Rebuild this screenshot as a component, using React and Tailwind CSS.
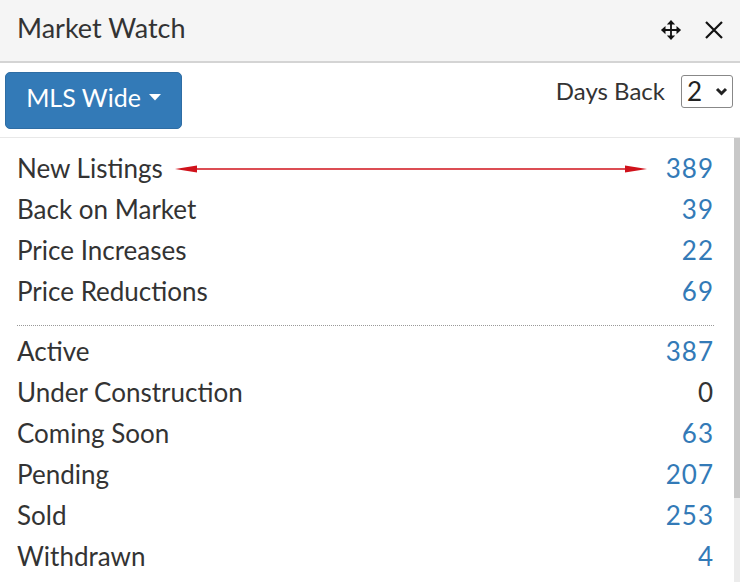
import React from "react";

const rows1 = [
  ["New Listings", "389", true],
  ["Back on Market", "39", true],
  ["Price Increases", "22", true],
  ["Price Reductions", "69", true],
];
const rows2 = [
  ["Active", "387", true],
  ["Under Construction", "0", false],
  ["Coming Soon", "63", true],
  ["Pending", "207", true],
  ["Sold", "253", true],
  ["Withdrawn", "4", true],
];

function Row({ label, value, link, arrow }) {
  return (
    <div className="relative flex h-[41px] items-center justify-between">
      <span className="text-[#333]">{label}</span>
      {arrow && (
        <svg className="absolute left-[158px] top-[16px]" width="472" height="10" viewBox="0 0 472 10">
          <line x1="10" y1="5" x2="462" y2="5" stroke="#d0121b" strokeWidth="1.3" />
          <polygon points="0,5 22,1.5 22,8.5" fill="#d0121b" />
          <polygon points="472,5 450,1.5 450,8.5" fill="#d0121b" />
        </svg>
      )}
      <span className={"tracking-[1px] " + (link ? "text-[#337ab7]" : "text-[#333]")}>{value}</span>
    </div>
  );
}

export default function App() {
  return (
    <div
      className="flex h-[582px] w-[740px] flex-col overflow-hidden bg-white"
      style={{ fontFamily: "Lato, 'Open Sans', sans-serif" }}
    >
      <div className="flex h-[63px] shrink-0 items-center justify-between border-b-2 border-[#d4d4d4] bg-[#f5f5f5] pl-[17px] pr-[16px]">
        <span className="text-[27px] text-[#333] pb-[4px]">Market Watch</span>
        <div className="flex items-center gap-[22px] pb-[2px]">
          <svg width="22" height="22" viewBox="0 0 24 24">
            <path d="M11 4h2v16h-2z M4 11h16v2H4z" fill="#111" />
            <polygon points="12,1 16.5,6 7.5,6" fill="#111" />
            <polygon points="12,23 16.5,18 7.5,18" fill="#111" />
            <polygon points="1,12 6,7.5 6,16.5" fill="#111" />
            <polygon points="23,12 18,7.5 18,16.5" fill="#111" />
          </svg>
          <svg width="20" height="20" viewBox="0 0 20 20">
            <path d="M2 2L18 18M18 2L2 18" stroke="#111" strokeWidth="2.2" />
          </svg>
        </div>
      </div>
      <div className="flex h-[75px] shrink-0 items-center justify-between border-b border-[#e8e8e8] pl-[5px] pr-[7px]">
        <button className="flex h-[57px] w-[177px] items-center justify-center gap-[8px] rounded-[5px] border border-[#2e6da4] bg-[#337ab7] pb-[5px] text-[25px] text-white">
          <span>MLS Wide</span>
          <svg width="12" height="7" viewBox="0 0 12 7">
            <polygon points="0,0 12,0 6,6.5" fill="#fff" />
          </svg>
        </button>
        <div className="flex items-center gap-[16px] pb-[18px]">
          <span className="text-[24px] text-[#333]">Days Back</span>
          <div className="flex h-[33px] w-[52px] items-center justify-between rounded-[3px] border border-[#888] pl-[5px] pr-[4px] text-[26px] text-[#222]">
            <span>2</span>
            <svg width="13" height="10" viewBox="0 0 13 10">
              <path d="M2 3L6.5 7.5L11 3" stroke="#222" strokeWidth="3" fill="none" />
            </svg>
          </div>
        </div>
      </div>
      <div className="flex min-h-0 flex-1">
        <div className="flex-1 pl-[17px] pr-[20px] pt-[10px] text-[26px]">
          {rows1.map(([l, v, k], i) => (
            <Row key={l} label={l} value={v} link={k} arrow={i === 0} />
          ))}
          <div className="mb-[5px] mt-[13px] border-t border-dotted border-[#999]" />
          {rows2.map(([l, v, k]) => (
            <Row key={l} label={l} value={v} link={k} />
          ))}
        </div>
        <div className="flex w-[6px] flex-col bg-[#ececec]">
          <div className="h-[360px] bg-[#c8c8c8]" />
        </div>
      </div>
    </div>
  );
}
